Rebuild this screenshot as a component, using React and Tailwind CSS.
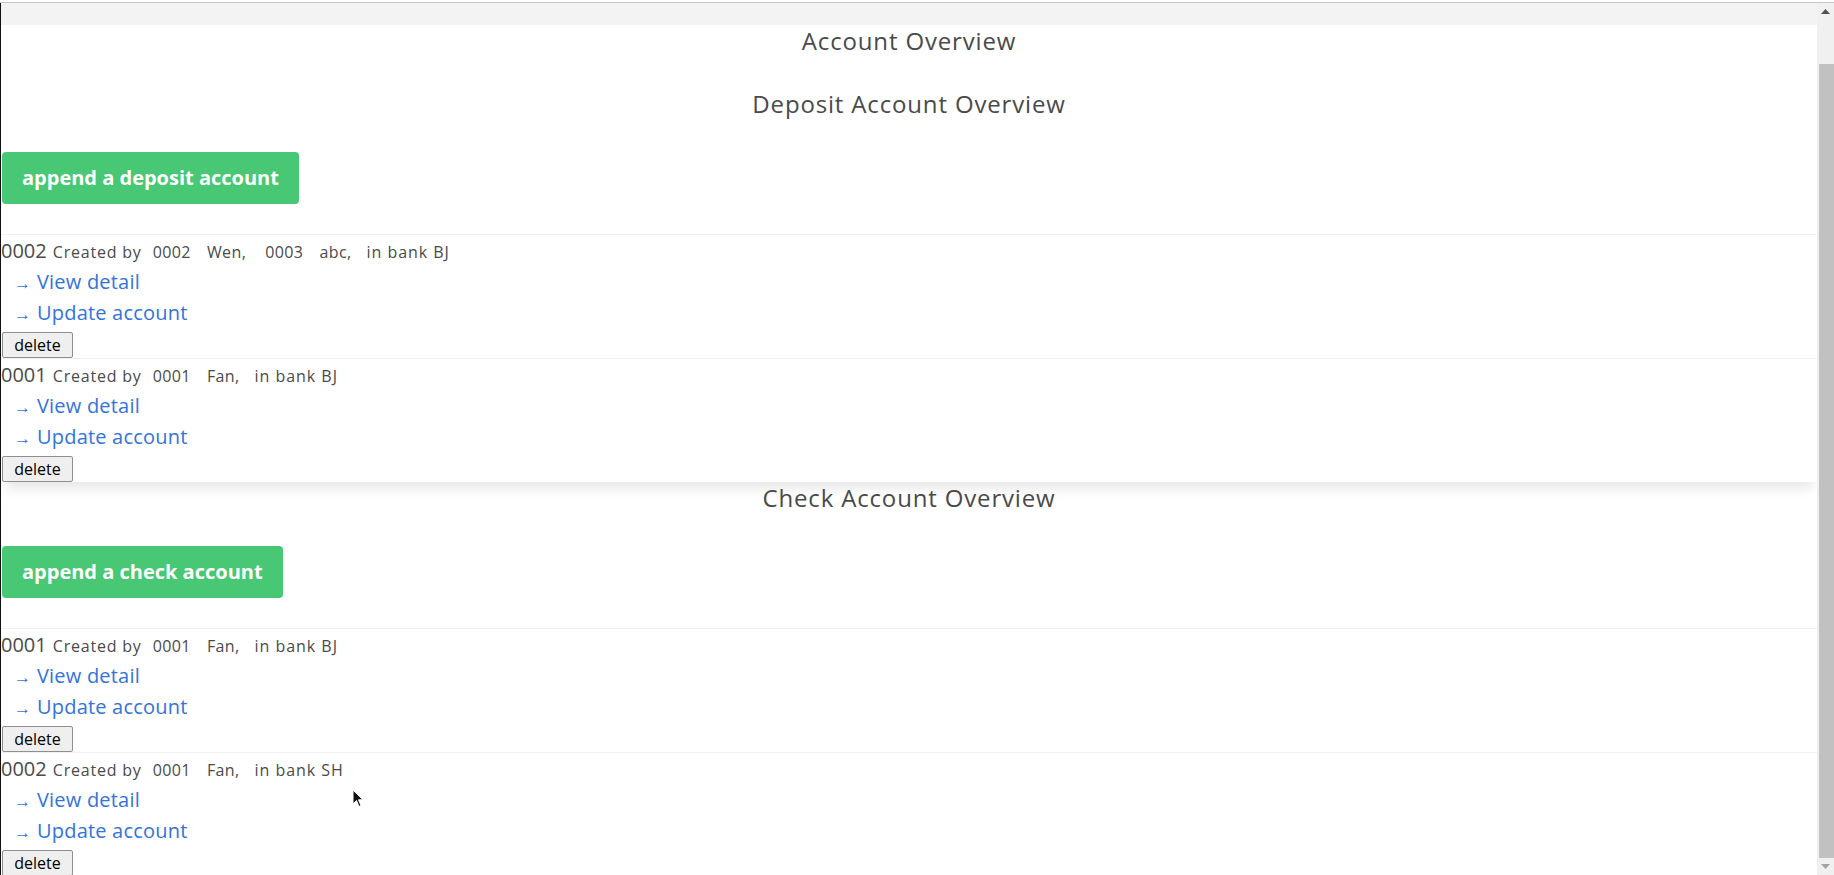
import React from 'react';

const deposits = [
  { id: '0002', owners: [['0002', 'Wen'], ['0003', 'abc']], bank: 'BJ' },
  { id: '0001', owners: [['0001', 'Fan']], bank: 'BJ' },
];

const checks = [
  { id: '0001', owners: [['0001', 'Fan']], bank: 'BJ' },
  { id: '0002', owners: [['0001', 'Fan']], bank: 'SH' },
];

function LinkLine({ label }) {
  return (
    <a href="#" className="flex items-baseline h-[31px] leading-[31px] text-[#3273dc] no-underline">
      <span className="ml-[13px] w-[23px] text-[17px] font-['Liberation_Sans',sans-serif]">→</span>
      <span className="text-[20px] tracking-[0.01em]">{label}</span>
    </a>
  );
}

function AccountRow({ account }) {
  return (
    <div className="border-t border-[#f1f1f1]">
      {/* header line */}
      <div className="h-[31px] leading-[31px] whitespace-nowrap text-[#4a4a4a]">
        <span className="text-[20px]">{account.id}</span>
        <span className="text-[16px] tracking-[0.05em] ml-[6px]">Created by</span>
        {account.owners.map(([uid, name]) => (
          <span key={uid + name} className="text-[16px] tracking-[0.025em]">
            <span className="ml-[11px]">{uid}</span>
            <span className="ml-[16px]">{name},</span>
            <span className="mr-[8px]" />
          </span>
        ))}
        <span className="text-[16px] tracking-[0.06em] ml-[7px]">in bank {account.bank}</span>
      </div>
      <LinkLine label="View detail" />
      <div className="h-[30px]">
        <LinkLine label="Update account" />
      </div>
      <div className="mt-[5px] h-[26px]">
        <button className="h-[26px] w-[71px] ml-px border border-[#8f8f8f] rounded-[2px] bg-[#efefef] text-[16px] leading-none text-black">
          delete
        </button>
      </div>
    </div>
  );
}

function Section({ title, action, accounts, boxed }) {
  return (
    <section className={boxed ? 'shadow-[0_10px_12px_-4px_rgba(10,10,10,0.1)]' : ''}>
      <h2 className="h-[30px] leading-[30px] text-center text-[24px] tracking-[0.035em] text-[#4a4a4a]">{title}</h2>
      <div className="mt-[33px]">
        <button className="h-[52px] px-[20px] ml-px rounded-[4px] bg-[#48c774] text-white text-[20px] font-bold leading-none">
          {action}
        </button>
      </div>
      <div className="mt-[30px]">
        {accounts.map((a) => (
          <AccountRow key={a.id + a.bank} account={a} />
        ))}
      </div>
    </section>
  );
}

function Scrollbar() {
  return (
    <div className="w-[17px] shrink-0 bg-[#f0f0f0] flex flex-col items-end">
      <div className="h-[17px] w-full flex items-center justify-center">
        <svg width="9" height="5" viewBox="0 0 9 5">
          <polygon points="0,5 4.5,0 9,5" fill="#505050" />
        </svg>
      </div>
      <div className="h-[44px]" />
      <div className="w-[15px] h-[794px] bg-[#c1c1c1]" />
      <div className="flex-1 w-full flex items-center justify-center">
        <svg width="9" height="5" viewBox="0 0 9 5">
          <polygon points="0,0 9,0 4.5,5" fill="#a3a3a3" />
        </svg>
      </div>
    </div>
  );
}

export default function App() {
  return (
    <div className="relative h-[875px] w-full overflow-hidden bg-white flex flex-col font-['Open_Sans',sans-serif]">
      <div className="h-[2px] shrink-0" />
      <div className="h-px shrink-0 bg-[#c6c6c6]" />
      <div className="flex flex-1 min-h-0 border-l border-[#111]">
        <main className="flex-1 min-w-0 flex flex-col">
          <div className="h-[22px] shrink-0 bg-[#f3f3f3]" />
          <div className="flex-1">
            <h1 className="pt-px h-[31px] leading-[30px] text-center text-[24px] tracking-[0.035em] text-[#4a4a4a]">Account Overview</h1>
            <div className="pt-[33px]">
              <Section title="Deposit Account Overview" action="append a deposit account" accounts={deposits} boxed />
            </div>
            <div className="pt-px">
              <Section title="Check Account Overview" action="append a check account" accounts={checks} />
            </div>
          </div>
        </main>
        <Scrollbar />
      </div>
      {/* mouse pointer */}
      <svg className="absolute left-[352px] top-[789px]" width="12" height="19" viewBox="0 0 12 19">
        <path d="M1 1 L1 15 L4.5 11.5 L7 17.5 L9 16.5 L6.5 10.8 L11 10.8 Z" fill="#111" stroke="#fff" strokeWidth="1" />
      </svg>
    </div>
  );
}
